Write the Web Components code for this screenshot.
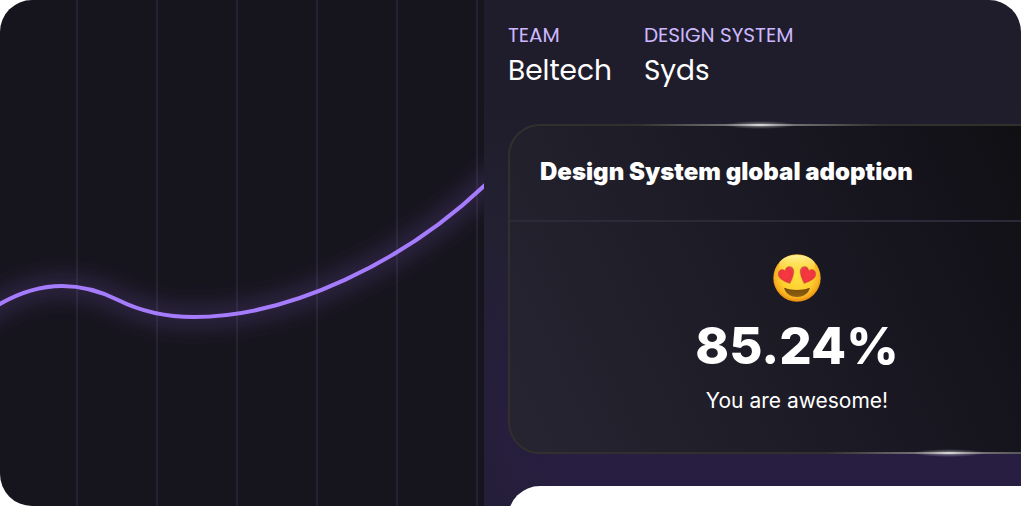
<!DOCTYPE html>
<html lang="en">
<head>
<meta charset="utf-8">
<meta name="viewport" content="width=device-width, initial-scale=1">
<title>Design System adoption</title>
<style>
body { margin: 0; background: #fff; font-family: Inter, "Liberation Sans", sans-serif; color: #fff; }
</style>
</head>
<body>
<adoption-page></adoption-page>
<script>
function define(name, html) {
  const template = document.createElement('template');
  template.innerHTML = html;
  customElements.define(name, class extends HTMLElement {
    constructor() {
      super();
      this.attachShadow({ mode: 'open' }).append(template.content.cloneNode(true));
    }
  });
}

define('trend-chart', `
<style>
  :host {
    display: block; overflow: hidden;
    background: repeating-linear-gradient(to right, #16141d 0 76px, #252231 76px 78px, #16141d 78px 80px);
  }
  svg { display: block; width: 100%; height: 100%; }
</style>
<svg viewBox="0 0 484 506" preserveAspectRatio="xMidYMid slice" role="img" aria-label="Adoption trend, rising">
  <defs>
    <filter id="glow" filterUnits="userSpaceOnUse" x="-60" y="90" width="620" height="310"><feGaussianBlur stdDeviation="11"/></filter>
    <path id="curve" d="M-30 325C0 300 30 286 62 286C82 286 100 291 118 300C142 312 168 317 194 317C290 317 405 261 484 186L500 170"/>
  </defs>
  <use href="#curve" fill="none" stroke="#a67cff" stroke-width="20" stroke-opacity=".19" filter="url(#glow)"/>
  <use href="#curve" fill="none" stroke="#a67cff" stroke-width="4"/>
</svg>`);

define('labelled-value', `
<style>
  :host { display: block; font-family: Poppins, Inter, sans-serif; }
  dl, dd { margin: 0; }
  dt { font-size: 20px; line-height: 30px; font-weight: 400; color: #cdb8ff; }
  dd { font-size: 28px; line-height: 42px; font-weight: 400; }
</style>
<dl><dt><slot name="label"></slot></dt><dd><slot></slot></dd></dl>`);

define('heart-eyes', `
<style>:host { display: block; } svg { display: block; width: 48px; height: 48px; }</style>
<svg viewBox="0 0 48 48" role="img" aria-label="Smiling face with heart eyes">
  <defs>
    <radialGradient id="face" cx=".5" cy=".45" r=".56">
      <stop offset="0" stop-color="#ffe040"/><stop offset=".6" stop-color="#fdd02f"/>
      <stop offset=".84" stop-color="#f8b021"/><stop offset="1" stop-color="#e58608"/>
    </radialGradient>
    <linearGradient id="shine" x2="0" y2="1"><stop stop-color="#fff9a8" stop-opacity=".9"/><stop offset="1" stop-color="#ffe34a" stop-opacity="0"/></linearGradient>
    <radialGradient id="red" cx=".5" cy=".5" r=".6"><stop stop-color="#f8383f"/><stop offset=".65" stop-color="#ef3540"/><stop offset="1" stop-color="#e0525a"/></radialGradient>
    <linearGradient id="mouth" x2="0" y2="1"><stop stop-color="#77490a"/><stop offset="1" stop-color="#8f6411"/></linearGradient>
    <path id="heart" d="M17 29.4C13 28.2 6.5 25.5 5.3 21.5C4.5 18 6.8 15.5 9.3 15.6C10.6 15.6 11.5 16.2 12 17C12.2 14.5 14 12.5 16.5 12.5C19.5 12.6 21.3 15.3 20.8 18.5C20.3 22.5 18.5 26.5 17 29.4Z"/>
  </defs>
  <circle cx="24" cy="24" r="23.7" fill="url(#face)"/>
  <ellipse cx="24" cy="11" rx="18" ry="10" fill="url(#shine)"/>
  <g fill="url(#red)" stroke="#b5481a" stroke-opacity=".45" stroke-width=".7">
    <use href="#heart"/>
    <use href="#heart" transform="translate(48 0) scale(-1 1)"/>
  </g>
  <path d="M12.2 34.1C16 35.6 20 36 24 36S32 35.6 35.8 34.1C36.6 33.8 36.9 34.3 36.6 35.1C34.7 40.4 29.7 43 24 43S13.3 40.4 11.4 35.1C11.1 34.3 11.4 33.8 12.2 34.1Z" fill="url(#mouth)"/>
</svg>`);

define('adoption-card', `
<style>
  :host {
    display: block; position: relative; box-sizing: border-box;
    border: 2px solid #31302f; border-radius: 32px;
    background: linear-gradient(65deg, #252430 5%, #1d1b26 42%, #15131c 72%, #101013 92%);
  }
  header { padding: 31px 30px 33px; border-bottom: 2px solid #2c2a39; }
  h2 { margin: 0; font-size: 24px; line-height: 30px; font-weight: 900; white-space: nowrap; }
  .body { display: flex; flex-direction: column; align-items: center; padding: 32px 0 36px; }
  strong { margin-top: 12px; font-size: 51px; line-height: 64px; font-weight: 800; }
  p { margin: 8px 0 0; font-size: 21px; line-height: 30px; font-weight: 400; }
  .shine { position: absolute; width: 248px; height: 2px; background: linear-gradient(90deg, transparent, #77767b 40%, #999 50%, #77767b 60%, transparent); }
  .shine::after { content: ""; position: absolute; inset: -3px 88px; border-radius: 50%; background: radial-gradient(closest-side, #ffffffaa, #ffffff44 45%, transparent); }
  .top { top: -2px; left: 22%; }
  .bottom { bottom: -2px; right: 2%; }
</style>
<span class="shine top"></span>
<header><h2><slot name="title"></slot></h2></header>
<div class="body">
  <slot name="icon"></slot>
  <strong><slot name="value"></slot></strong>
  <p><slot></slot></p>
</div>
<span class="shine bottom"></span>`);

define('adoption-page', `
<style>
  :host {
    display: grid; grid-template-columns: 484fr 537fr; min-height: 100vh;
    border-radius: 32px 32px 0 32px; overflow: hidden;
  }
  trend-chart { min-height: 100%; height: 0; }
  main {
    min-width: 0; overflow: hidden; box-sizing: border-box;
    display: flex; flex-direction: column; padding: 20px 0 0 24px;
    background:
      radial-gradient(ellipse 90% 52% at 62% 86%, #281e42 0 50%, #281e4200 100%),
      linear-gradient(#1f1d2b 20%, #232032 45%, #211e2d);
  }
  .facts { display: flex; gap: 32px; margin-bottom: 32px; }
  adoption-card, .panel { margin-right: -65px; }
  .panel { flex: 1 0 40px; margin-top: 32px; margin-bottom: -20px; border-radius: 32px 0 0 0; background: #fff; }
</style>
<trend-chart></trend-chart>
<main>
  <div class="facts">
    <labelled-value><span slot="label">TEAM</span>Beltech</labelled-value>
    <labelled-value><span slot="label">DESIGN SYSTEM</span>Syds</labelled-value>
  </div>
  <adoption-card>
    <span slot="title">Design System global adoption</span>
    <heart-eyes slot="icon"></heart-eyes>
    <span slot="value">85.24%</span>
    You are awesome!
  </adoption-card>
  <div class="panel"></div>
</main>`);
</script>
</body>
</html>
